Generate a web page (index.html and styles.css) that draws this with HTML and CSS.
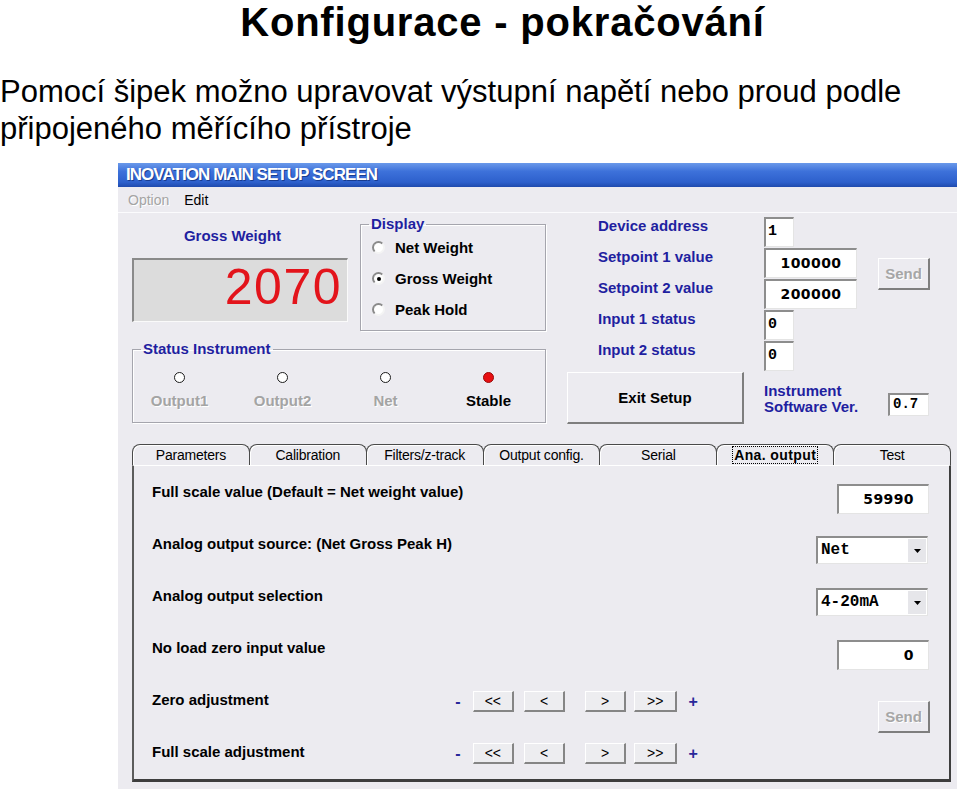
FILE: index.html
```html
<!DOCTYPE html>
<html lang="cs">
<head>
<meta charset="utf-8">
<title>Konfigurace - pokračování</title>
<link rel="stylesheet" href="styles.css">
</head>
<body>
<h1 class="heading">Konfigurace - pokračování</h1>
<p class="intro">Pomocí šipek možno upravovat výstupní napětí nebo proud podle<br>připojeného měřícího přístroje</p>

<div class="window">
  <div class="titlebar">INOVATION MAIN SETUP SCREEN</div>
  <div class="menubar">
    <span class="menu menu-disabled">Option</span>
    <span class="menu">Edit</span>
  </div>
  <div class="main">
    <div class="top">
      <div class="left">
        <div class="weight">
          <div class="weight-label">Gross Weight</div>
          <div class="lcd">2070</div>
        </div>
        <fieldset class="group display-group">
          <legend>Display</legend>
          <div class="radio-list">
            <div class="radio"><span class="radio-dot"></span>Net Weight</div>
            <div class="radio"><span class="radio-dot checked"></span>Gross Weight</div>
            <div class="radio"><span class="radio-dot"></span>Peak Hold</div>
          </div>
        </fieldset>
        <fieldset class="group status-group">
          <legend>Status Instrument</legend>
          <div class="leds">
            <div class="led-item"><span class="led"></span><span class="led-label">Output1</span></div>
            <div class="led-item"><span class="led"></span><span class="led-label">Output2</span></div>
            <div class="led-item"><span class="led"></span><span class="led-label">Net</span></div>
            <div class="led-item"><span class="led led-on"></span><span class="led-label led-label-on">Stable</span></div>
          </div>
        </fieldset>
      </div>

      <div class="right">
        <div class="field-label">Device address</div>
        <div class="box box-small">1</div>
        <button class="btn btn-disabled send-top">Send</button>
        <div class="field-label">Setpoint 1 value</div>
        <div class="box box-wide">100000</div>
        <div class="field-label">Setpoint 2 value</div>
        <div class="box box-wide">200000</div>
        <div class="field-label">Input 1 status</div>
        <div class="box box-small">0</div>
        <div class="field-label">Input 2 status</div>
        <div class="box box-small">0</div>
        <button class="btn exit">Exit Setup</button>
        <div class="instr">Instrument<br>Software Ver.</div>
        <div class="box ver">0.7</div>
      </div>
    </div>

    <div class="tabs">
      <div class="tab">Parameters</div>
      <div class="tab">Calibration</div>
      <div class="tab">Filters/z-track</div>
      <div class="tab">Output config.</div>
      <div class="tab">Serial</div>
      <div class="tab tab-active"><span class="focus">Ana. output</span></div>
      <div class="tab">Test</div>
    </div>

    <div class="panel">
      <div class="plabel">Full scale value (Default = Net weight value)</div>
      <div class="pctl pin">59990</div>

      <div class="plabel">Analog output source: (Net Gross Peak H)</div>
      <div class="pctl select">
        <span class="select-value">Net</span>
        <span class="select-arrow"><svg width="7" height="4" viewBox="0 0 7 4"><path d="M0 0H7L3.5 4Z" fill="#000"/></svg></span>
      </div>

      <div class="plabel">Analog output selection</div>
      <div class="pctl select">
        <span class="select-value">4-20mA</span>
        <span class="select-arrow"><svg width="7" height="4" viewBox="0 0 7 4"><path d="M0 0H7L3.5 4Z" fill="#000"/></svg></span>
      </div>

      <div class="plabel">No load zero input value</div>
      <div class="pctl pin">0</div>

      <div class="plabel plabel-short">Zero adjustment</div>
      <div class="adjust">
        <span class="sign minus">-</span>
        <button class="abtn">&lt;&lt;</button>
        <button class="abtn gap-wide">&lt;</button>
        <button class="abtn gap-narrow">&gt;</button>
        <button class="abtn abtn-wide">&gt;&gt;</button>
        <span class="sign plus">+</span>
      </div>
      <button class="btn btn-disabled send-bottom">Send</button>

      <div class="plabel plabel-short">Full scale adjustment</div>
      <div class="adjust">
        <span class="sign minus">-</span>
        <button class="abtn">&lt;&lt;</button>
        <button class="abtn gap-wide">&lt;</button>
        <button class="abtn gap-narrow">&gt;</button>
        <button class="abtn abtn-wide">&gt;&gt;</button>
        <span class="sign plus">+</span>
      </div>
    </div>
  </div>
</div>
</body>
</html>
```

FILE: styles.css
```css
* { box-sizing: border-box; }

html, body { margin: 0; padding: 0; overflow: hidden; }

body {
  width: 959px;
  height: 789px;
  background: #fff;
  color: #000;
  font-family: "Liberation Sans", Arial, sans-serif;
}

.heading {
  margin: 0;
  padding-left: 46px;
  font-size: 40px;
  letter-spacing: 0.8px;
  line-height: 45px;
  font-weight: 700;
  text-align: center;
}

.intro {
  margin: 28px 0 0;
  font-size: 31px;
  line-height: 37px;
  white-space: nowrap;
}

/* ---------- window ---------- */
.window {
  margin: 16px 0 0 118px;
  width: 839px;
  height: 630px;
  background: #ecebf0;
  overflow: hidden;
}

.titlebar {
  height: 24px;
  padding-left: 8px;
  background: linear-gradient(#6a99ea 0%, #3d71da 35%, #2d60cc 80%, #1f4aad 100%);
  color: #fff;
  font-size: 17px;
  font-weight: 700;
  letter-spacing: -0.95px;
  line-height: 24px;
  text-shadow: 1px 1px 0 #183c8f;
  white-space: nowrap;
}

.menubar {
  height: 26px;
  display: flex;
  align-items: center;
  gap: 15px;
  padding-left: 10px;
  font-size: 14px;
  border-bottom: 1px solid #fbfbfd;
}

.menu-disabled {
  color: #a4a4a4;
  text-shadow: 1px 1px 0 #fff;
}

.main {
  padding: 3px 6px 0 14px;
}

.top {
  display: flex;
  gap: 21px;
  height: 208px;
}

/* ---------- left block ---------- */
.left {
  width: 414px;
  display: grid;
  grid-template-columns: 216px 186px;
  grid-template-rows: 115px 82px;
  column-gap: 12px;
  row-gap: 10px;
}

.weight { padding-top: 11px; }

.weight-label {
  padding-right: 15px;
  text-align: center;
  color: #1f1fa0;
  font-size: 15px;
  font-weight: 700;
  line-height: 18px;
}

.lcd {
  margin-top: 13px;
  height: 64px;
  padding-right: 5px;
  background: #dcdcdc;
  border-style: solid;
  border-width: 2px 1px 1px 2px;
  border-color: #8a8a8a #fafafa #fafafa #8a8a8a;
  color: #e3141b;
  font-size: 50px;
  letter-spacing: 1.5px;
  line-height: 54px;
  text-align: right;
}

.group {
  margin: 0;
  padding: 0;
  min-width: 0;
  border: 1px solid #a5a5ad;
  box-shadow: inset 1px 1px 0 #fff, 1px 1px 0 #fff;
}

.group legend {
  margin-left: 8px;
  padding: 0 2px;
  color: #1f1fa0;
  font-size: 15px;
  font-weight: 700;
  line-height: 16px;
}

.radio-list { padding-left: 11px; }

.radio {
  display: flex;
  align-items: center;
  gap: 10px;
  height: 31px;
  font-size: 15px;
  font-weight: 700;
}

.radio-dot {
  width: 13px;
  height: 13px;
  border-radius: 50%;
  border: 2px solid;
  border-color: #8a8a8a #f4f4f4 #f4f4f4 #8a8a8a;
  background: #fff;
  display: flex;
  align-items: center;
  justify-content: center;
}

.radio-dot.checked::after {
  content: "";
  width: 4px;
  height: 4px;
  border-radius: 50%;
  background: #000;
}

.status-group { grid-column: 1 / -1; }

.leds {
  display: grid;
  grid-template-columns: repeat(4, 103px);
  margin-left: -5px;
  padding-top: 15px;
}

.led-item {
  display: flex;
  flex-direction: column;
  align-items: center;
  gap: 9px;
}

.led {
  width: 11px;
  height: 11px;
  border-radius: 50%;
  border: 1px solid #1c1c1c;
  background: #fff;
}

.led-on {
  background: #e80f12;
  border-color: #9a0a0a;
}

.led-label {
  color: #a4a4a4;
  text-shadow: 1px 1px 0 #fff;
  font-size: 15px;
  font-weight: 700;
  line-height: 18px;
}

.led-label-on {
  color: #000;
  text-shadow: none;
}

/* ---------- right block ---------- */
.right {
  display: grid;
  grid-template-columns: 197px 114px 52px;
  grid-template-rows: repeat(5, 31px) 52px;
  align-items: start;
  margin-top: 1px;
}

.field-label {
  grid-column: 1;
  padding-left: 31px;
  color: #1f1fa0;
  font-size: 15px;
  font-weight: 700;
  line-height: 18px;
  white-space: nowrap;
}

.box {
  background: #fff;
  border-style: solid;
  border-width: 2px 1px 1px 2px;
  border-color: #8d8d8d #e4e4e4 #e4e4e4 #8d8d8d;
}

.box-small {
  grid-column: 2;
  width: 30px;
  height: 30px;
  padding-left: 2px;
  font-family: "Liberation Mono", "Courier New", monospace;
  font-size: 15px;
  font-weight: 700;
  line-height: 26px;
}

.box-wide {
  grid-column: 2;
  width: 93px;
  height: 30px;
  text-align: center;
  font-family: "DejaVu Sans", Verdana, sans-serif;
  font-size: 14px;
  font-weight: 700;
  letter-spacing: 0.4px;
  line-height: 26px;
}

.btn {
  padding: 0;
  background: #ecebf0;
  border-style: solid;
  border-width: 1px 2px 2px 1px;
  border-color: #fff #7e7e7e #7e7e7e #fff;
  color: #000;
  font-family: "Liberation Sans", Arial, sans-serif;
  font-size: 15px;
  font-weight: 700;
}

.btn-disabled {
  color: #a6a6a6;
  text-shadow: 1px 1px 0 #fff;
}

.send-top {
  grid-column: 3;
  grid-row: 2 / span 2;
  margin-top: 10px;
  width: 52px;
  height: 32px;
}

.exit {
  grid-column: 1;
  width: 177px;
  height: 52px;
}

.instr {
  grid-column: 2;
  margin-top: 11px;
  color: #1f1fa0;
  font-size: 15px;
  font-weight: 700;
  line-height: 16px;
  white-space: nowrap;
}

.ver {
  grid-column: 3;
  margin: 21px 0 0 10px;
  width: 41px;
  height: 23px;
  padding-left: 3px;
  font-family: "Liberation Mono", "Courier New", monospace;
  font-size: 14px;
  font-weight: 700;
  line-height: 19px;
}

/* ---------- tabs ---------- */
.tabs {
  display: flex;
  width: 819px;
  height: 21px;
  margin-top: 20px;
}

.tab {
  flex: 1;
  margin-left: -1px;
  border: 1px solid #4a4a4a;
  border-bottom: none;
  border-radius: 8px 8px 0 0;
  box-shadow: inset 1px 1px 0 #fff;
  text-align: center;
  font-size: 14px;
  letter-spacing: -0.2px;
  line-height: 20px;
  white-space: nowrap;
}

.tab:first-child { margin-left: 0; }

.tab-active .focus {
  padding: 0 1px;
  outline: 1px dotted #000;
  font-weight: 700;
  letter-spacing: 0.4px;
}

/* ---------- panel ---------- */
.panel {
  width: 819px;
  height: 317px;
  display: grid;
  grid-template-columns: 301px 246px 1fr 115px;
  grid-template-rows: repeat(6, 52px);
  align-items: start;
  padding: 0 19px 0 18px;
  border-top: 1px solid #fff;
  border-left: 2px solid #5c5c5c;
  border-right: 2px solid #3e3e3e;
  border-bottom: 3px solid #3e3e3e;
}

.plabel {
  grid-column: 1 / 4;
  margin-top: 17px;
  font-size: 15px;
  font-weight: 700;
  line-height: 18px;
  white-space: nowrap;
}

.plabel-short { grid-column: 1; }

.pctl {
  grid-column: 4;
  justify-self: end;
  margin-top: 18px;
}

.pin {
  width: 92px;
  height: 30px;
  margin-right: 1px;
  padding-right: 14px;
  background: #fff;
  border-style: solid;
  border-width: 2px 1px 1px 2px;
  border-color: #8d8d8d #e4e4e4 #e4e4e4 #8d8d8d;
  text-align: right;
  font-family: "DejaVu Sans", Verdana, sans-serif;
  font-size: 14px;
  font-weight: 700;
  letter-spacing: 0.4px;
  line-height: 26px;
}

.select {
  display: flex;
  width: 112px;
  height: 28px;
  margin-right: 2px;
  background: #fff;
  border-style: solid;
  border-width: 2px 1px 1px 2px;
  border-color: #8d8d8d #e4e4e4 #e4e4e4 #8d8d8d;
}

.select-value {
  flex: 1;
  padding-left: 3px;
  font-family: "Liberation Mono", "Courier New", monospace;
  font-size: 16px;
  font-weight: 700;
  line-height: 24px;
}

.select-arrow {
  width: 19px;
  margin: 1px;
  display: flex;
  align-items: center;
  justify-content: center;
  background: #e6e6ea;
  border-left: 1px solid #fff;
}

.adjust {
  grid-column: 2;
  margin-top: 17px;
  display: flex;
  align-items: center;
  height: 21px;
}

.sign {
  width: 10px;
  text-align: center;
  color: #28289a;
  font-size: 16px;
  font-weight: 700;
  line-height: 21px;
}

.minus { margin-right: 10px; }
.plus { margin-left: 10px; width: 12px; }

.abtn {
  width: 42px;
  height: 21px;
  margin-left: 10px;
  padding: 0;
  background: #ededf0;
  border-style: solid;
  border-width: 1px 2px 2px 1px;
  border-color: #fff #858585 #858585 #fff;
  color: #000;
  font-family: "Liberation Sans", Arial, sans-serif;
  font-size: 14px;
  line-height: 17px;
}

.adjust .abtn:first-of-type { margin-left: 0; }
.abtn.gap-narrow { margin-left: 20px; }
.abtn.abtn-wide { width: 44px; margin-left: 8px; }

.send-bottom {
  grid-column: 4;
  grid-row: 5 / span 2;
  justify-self: end;
  margin-top: 27px;
  width: 52px;
  height: 32px;
}
```
